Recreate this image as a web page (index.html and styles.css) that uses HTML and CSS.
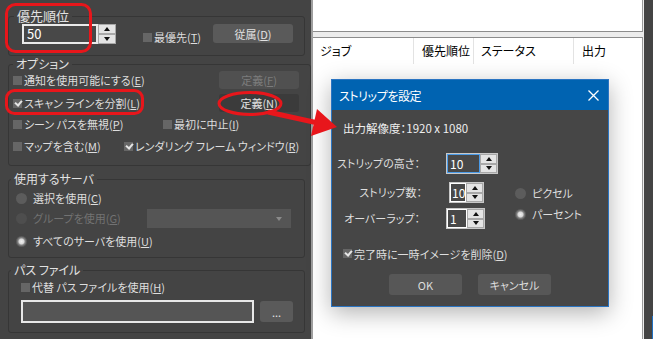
FILE: index.html
```html
<!DOCTYPE html>
<html lang="ja">
<head>
    <meta charset="UTF-8">
    <title>ストリップを設定</title>
    <link rel="stylesheet" href="styles.css">
</head>
<body>
    <div class="app">
        <div class="panel">
            <fieldset class="group g-priority">
                <legend>優先順位</legend>
                <div class="prio-row">
                    <div class="spin spin-prio">
                        <span class="spin-val">50</span>
                        <span class="spin-btns"><span class="up"></span><span class="down"></span></span>
                    </div>
                    <label class="check prio-check"><span class="box"></span>最優先(<u>T</u>)</label>
                    <button class="btn prio-btn">従属(<u>D</u>)</button>
                </div>
            </fieldset>

            <fieldset class="group g-options">
                <legend>オプション</legend>
                <div class="opt-row r1">
                    <label class="check grow"><span class="box"></span>通知を使用可能にする(<u>E</u>)</label>
                    <button class="btn off">定義(<u>F</u>)</button>
                </div>
                <div class="opt-row r2">
                    <label class="check grow"><span class="box on"></span>スキャン ラインを分割(<u>L</u>)</label>
                    <button class="btn dark">定義(<u>N</u>)</button>
                </div>
                <div class="opt-row r3">
                    <label class="check w150"><span class="box"></span>シーン パスを無視(<u>P</u>)</label>
                    <label class="check"><span class="box"></span>最初に中止(<u>I</u>)</label>
                </div>
                <div class="opt-row r4">
                    <label class="check w111"><span class="box"></span>マップを含む(<u>M</u>)</label>
                    <label class="check"><span class="box on"></span>レンダリング フレーム ウィンドウ(<u>R</u>)</label>
                </div>
            </fieldset>

            <fieldset class="group g-servers">
                <legend>使用するサーバ</legend>
                <div class="srv-row">
                    <label class="radio"><span class="dot"></span>選択を使用(<u>C</u>)</label>
                </div>
                <div class="srv-row">
                    <label class="radio off w131"><span class="dot"></span>グループを使用(<u>G</u>)</label>
                    <div class="select"><span class="caret"></span></div>
                </div>
                <div class="srv-row r-all">
                    <label class="radio"><span class="dot on"></span>すべてのサーバを使用(<u>U</u>)</label>
                </div>
            </fieldset>

            <fieldset class="group g-path">
                <legend>パス ファイル</legend>
                <label class="check path-check"><span class="box"></span>代替 パス ファイルを使用(<u>H</u>)</label>
                <div class="path-row">
                    <div class="path-input"></div>
                    <button class="btn browse">...</button>
                </div>
            </fieldset>
        </div>

        <div class="divider"></div>

        <div class="right">
            <div class="list-top"></div>
            <div class="list-jobs">
                <div class="list-head">
                    <span class="col c-job">ジョブ</span>
                    <span class="col c-prio">優先順位</span>
                    <span class="col c-status">ステータス</span>
                    <span class="col c-out">出力</span>
                </div>
            </div>
        </div>

        <div class="edge"><span class="edge-blue"></span></div>
    </div>

    <div class="dialog">
        <div class="d-title">
            <span>ストリップを設定</span>
            <svg class="d-close" width="11" height="11" viewBox="0 0 11 11">
                <path d="M0.5 0.5 L10.5 10.5 M10.5 0.5 L0.5 10.5" stroke="#fff" stroke-width="1.3" fill="none"/>
            </svg>
        </div>
        <div class="d-body">
            <div class="d-res">出力解像度：1920 x 1080</div>
            <div class="d-grid">
                <span class="d-label">ストリップの高さ：</span>
                <div class="spin spin-d focus w-34">
                    <span class="spin-val">10</span>
                    <span class="spin-btns"><span class="up"></span><span class="down"></span></span>
                </div>

                <span class="d-label l2">ストリップ数：</span>
                <div class="spin spin-d w-16 shift">
                    <span class="spin-val">10</span>
                    <span class="spin-btns"><span class="up"></span><span class="down"></span></span>
                </div>
                <div class="d-radios">
                    <label class="radio"><span class="dot"></span>ピクセル</label>
                    <label class="radio"><span class="dot on"></span>パーセント</label>
                </div>

                <span class="d-label">オーバーラップ：</span>
                <div class="spin spin-d w-21">
                    <span class="spin-val">1</span>
                    <span class="spin-btns"><span class="up"></span><span class="down"></span></span>
                </div>
            </div>
            <label class="check d-check"><span class="box on"></span>完了時に一時イメージを削除(<u>D</u>)</label>
            <div class="d-buttons">
                <button class="btn d-btn">OK</button>
                <button class="btn d-btn">キャンセル</button>
            </div>
        </div>
    </div>

    <!-- red markup drawn over the screenshot -->
    <svg class="marks" width="653" height="339" viewBox="0 0 653 339">
        <g fill="none" stroke="#e8161b" stroke-width="3">
            <rect x="6.5" y="4.5" width="84" height="47" rx="9"/>
            <rect x="6.5" y="90.5" width="136" height="23" rx="8"/>
            <ellipse cx="250" cy="103.5" rx="31" ry="11"/>
        </g>
        <line x1="268" y1="112" x2="318" y2="123" stroke="#e8161b" stroke-width="5"/>
        <polygon points="337,127 311,136 317,109" fill="#e8161b"/>
    </svg>
</body>
</html>
```

FILE: styles.css
```css
body {
    margin: 0;
    width: 653px;
    height: 339px;
    overflow: hidden;
    position: relative;
    background: #444;
    font-family: "Noto Sans CJK JP", "Noto Sans", sans-serif;
    font-size: 11px;
    font-feature-settings: "palt";
    color: #dedede;
}
u {
    text-decoration-thickness: 1px;
    text-underline-offset: 1px;
}
.app {
    display: flex;
    height: 339px;
}

/* left settings panel */
.panel {
    width: 311px;
    box-sizing: border-box;
    padding: 9px 0 0 8px;
    background: #444;
}
.group {
    width: 297px;
    box-sizing: border-box;
    margin: 0;
    padding: 0;
    border: 1px solid #363636;
    border-radius: 3px;
}
.group legend {
    margin-left: 4px;
    padding: 0 3px;
    font-size: 12px;
    line-height: 14px;
    color: #e2e2e2;
}
.g-priority {
    height: 47px;
}
.g-priority legend {
    font-size: 13px;
    margin-left: 5px;
}
.g-options {
    margin-top: 1px;
    height: 109px;
    padding-left: 4px;
}
.g-options legend { margin-left: 0; }
.g-servers {
    margin-top: 6px;
    height: 86px;
    padding-left: 7px;
}
.g-servers legend { margin-left: -5px; }
.g-path {
    margin-top: 5px;
    height: 70px;
    padding-left: 12px;
}
.g-path legend { margin-left: -10px; }

.prio-row {
    display: flex;
    align-items: flex-start;
    padding: 1px 0 0 13px;
    height: 30px;
}
.prio-check {
    margin: 6px 0 0 27px;
    width: 70px;
}
.prio-btn {
    width: 80px;
    height: 19px;
}

.opt-row {
    display: flex;
    align-items: center;
    height: 18px;
    padding-right: 11px;
}
.r2 { margin-top: 5px; }
.r3 { margin-top: 3px; }
.r4 { margin-top: 4px; }
.grow { flex: 1; }
.w150 { width: 150px; }
.w111 { width: 111px; }
.opt-row .btn {
    width: 80px;
    height: 18px;
}

.srv-row {
    display: flex;
    align-items: center;
    height: 20px;
}
.srv-row:first-of-type { margin-top: 2px; }
.r-all { margin-top: 3px; }
.w131 { width: 131px; }
.select {
    position: relative;
    width: 144px;
    height: 19px;
    background: #555;
}
.caret {
    position: absolute;
    right: 9px;
    top: 8px;
    border-left: 3px solid transparent;
    border-right: 3px solid transparent;
    border-top: 4px solid #8a8a8a;
}

.path-check {
    margin-top: 1px;
    height: 18px;
}
.path-row {
    display: flex;
    align-items: center;
    margin-top: 4px;
}
.path-input {
    width: 229px;
    height: 19px;
    border: 2px solid #e8e8e8;
    background: #555;
}
.browse {
    margin-left: 6px;
    width: 33px;
    height: 21px;
    color: #8a8a8a;
    background: #505050;
}

/* checkboxes and radios */
.check, .radio {
    display: flex;
    align-items: center;
    white-space: nowrap;
    line-height: 14px;
}
.box {
    position: relative;
    flex: none;
    width: 9px;
    height: 9px;
    margin-right: 2px;
    background: #666;
}
.box.on::after {
    content: "";
    position: absolute;
    left: 2px;
    top: 1px;
    width: 5px;
    height: 3px;
    border-left: 2px solid #e6e6e6;
    border-bottom: 2px solid #e6e6e6;
    transform: rotate(-50deg);
}
.dot {
    flex: none;
    width: 11px;
    height: 11px;
    margin-right: 6px;
    border-radius: 50%;
    background: #5c5c5c;
}
.dot.on {
    background: radial-gradient(circle, #f0f0f0 0, #d8d8d8 2.5px, #8a8a8a 3.5px, #5c5c5c 5px);
}
.radio.off {
    color: #727272;
}
.radio.off .dot {
    background: #4e4e4e;
}

/* buttons */
.btn {
    padding: 0;
    border: none;
    border-radius: 3px;
    background: #5a5a5a;
    color: #e2e2e2;
    font: inherit;
    line-height: 14px;
}
.btn.off {
    background: #505050;
    color: #7c7c7c;
}
.btn.dark {
    background: #3b3b3b;
}

/* spinners */
.spin {
    display: flex;
    flex: none;
}
.spin-val {
    box-sizing: border-box;
    border: 2px solid #eaeaea;
    background: #484848;
    color: #fff;
    font-size: 13px;
    line-height: 16px;
    padding-left: 3px;
}
.spin-prio .spin-val {
    width: 76px;
    height: 20px;
}
.spin-btns {
    display: flex;
    flex-direction: column;
    width: 18px;
}
.up, .down {
    flex: 1;
    position: relative;
    box-sizing: border-box;
    border: 1px solid #a8a8a8;
    background: #e4e4e4;
}
.up::before, .down::before {
    content: "";
    position: absolute;
    left: 50%;
    top: 50%;
    margin: -2px 0 0 -3px;
    border-left: 3px solid transparent;
    border-right: 3px solid transparent;
}
.up::before { border-bottom: 4px solid #111; }
.down::before { border-top: 4px solid #111; }

/* right job list */
.divider {
    width: 2px;
    background: #9e9e9e;
}
.right {
    width: 331px;
    box-sizing: border-box;
    padding-right: 1px;
    display: flex;
    flex-direction: column;
    background: #ececec;
}
.list-top {
    height: 31px;
    background: #fff;
    border-right: 1px solid #9a9a9a;
    border-bottom: 1px solid #8c8c8c;
}
.list-jobs {
    flex: 1;
    margin-top: 5px;
    background: #fff;
    border-top: 1px solid #8c8c8c;
    border-right: 1px solid #9a9a9a;
}
.list-head {
    display: flex;
    height: 26px;
    color: #000;
    font-size: 12px;
    line-height: 26px;
}
.col {
    box-sizing: border-box;
    padding-left: 7px;
    border-right: 1px solid #e3e3e3;
}
.c-job { width: 101px; }
.c-prio { width: 60px; padding-left: 8px; }
.c-status { width: 100px; }
.c-out { flex: 1; border-right: none; padding-left: 8px; }
.edge {
    flex: 1;
    position: relative;
    background: #444;
}
.edge-blue {
    position: absolute;
    right: 0;
    bottom: 0;
    width: 1px;
    height: 23px;
    background: #1f6fc0;
}

/* strip dialog */
.dialog {
    position: absolute;
    left: 331px;
    top: 79px;
    width: 278px;
    height: 228px;
    box-sizing: border-box;
    border: 1px solid #2a74c2;
    background: #464646;
    box-shadow: 0 6px 22px rgba(0,0,0,0.3);
}
.d-title {
    display: flex;
    align-items: center;
    justify-content: space-between;
    height: 30px;
    padding: 0 9px 0 7px;
    background: #0063b1;
    color: #fff;
    font-size: 12px;
    letter-spacing: -0.4px;
}
.d-body {
    padding: 11px 0 0 11px;
}
.d-res {
    line-height: 14px;
    font-size: 11.5px;
    color: #eee;
}
.d-grid {
    display: grid;
    grid-template-columns: 103px 69px 1fr;
    grid-template-rows: 29px 26px 21px;
    margin-top: 18px;
}
.d-label {
    grid-column: 1;
    display: flex;
    justify-content: flex-end;
    height: 21px;
    line-height: 21px;
    padding-right: 26px;
    white-space: nowrap;
}
.d-label.l2 { padding-right: 24px; }
.spin-d {
    grid-column: 2;
    height: 21px;
    border: 1px solid #c8c8c8;
    box-sizing: border-box;
    align-self: start;
    width: max-content;
}
.spin-d .spin-val {
    height: 19px;
    border-width: 1px;
    border-color: #fff;
    font-size: 12px;
    line-height: 17px;
    padding-left: 2px;
}
.spin-d.focus .spin-val { border-color: #4a9be8; }
.spin-d .spin-btns { width: 17px; }
.w-34 .spin-val { width: 33px; }
.w-16 .spin-val { width: 16px; padding-left: 1px; }
.w-21 .spin-val { width: 20px; }
.shift { margin-left: 3px; }
.d-radios {
    grid-column: 3;
    grid-row: 2 / 4;
    display: flex;
    flex-direction: column;
    gap: 3px;
    padding-top: 2px;
}
.d-radios .radio { height: 18px; }
.d-check {
    margin-top: 17px;
    height: 15px;
}
.d-buttons {
    display: flex;
    justify-content: center;
    gap: 16px;
    margin: 13px 0 0 -11px;
}
.d-btn {
    width: 73px;
    height: 21px;
    background: #575757;
    color: #dcdcdc;
}

.marks {
    position: absolute;
    left: 0;
    top: 0;
    pointer-events: none;
}
```
